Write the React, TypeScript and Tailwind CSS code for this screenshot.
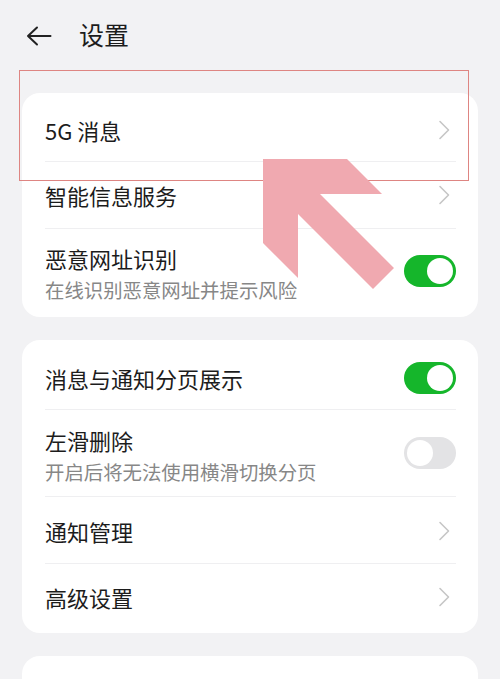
import React from "react";

const Chevron = () => (
  <svg width="12" height="20" viewBox="0 0 12 20" className="shrink-0">
    <path d="M2 1.5 L10.5 10 L2 18.5" fill="none" stroke="#c6c6c6" strokeWidth="1.6" strokeLinecap="round" strokeLinejoin="round" />
  </svg>
);

const Toggle = ({ on }: { on: boolean }) =>
  on ? (
    <div className="w-[52px] h-[32px] rounded-full bg-[#15b62b] flex items-center justify-end pr-[3px] shrink-0">
      <div className="w-[26px] h-[26px] rounded-full bg-white" />
    </div>
  ) : (
    <div className="w-[52px] h-[32px] rounded-full bg-[#e3e3e5] flex items-center justify-start pl-[3px] shrink-0">
      <div className="w-[26px] h-[26px] rounded-full bg-white" />
    </div>
  );

const Divider = () => <div className="h-px bg-[#efeff1] ml-[23px] mr-[22px]" />;

export default function App() {
  return (
    <div
      className="relative w-full min-h-[679px] h-[679px] overflow-hidden bg-[#f2f2f4]"
      style={{ fontFamily: '"Noto Sans CJK SC", "Noto Sans", sans-serif' }}
    >
      {/* header */}
      <div className="h-[72px] flex items-center pl-[26px]">
        <svg width="26" height="20" viewBox="0 0 26 20" className="shrink-0 mb-[1px]">
          <path d="M24.5 10 H2 M11 1.5 L2 10 L11 18.5" fill="none" stroke="#222" strokeWidth="2" strokeLinecap="round" strokeLinejoin="round" />
        </svg>
        <span className="ml-[27px] pb-[4px] text-[25px] leading-[34px] text-[#1c1c1c]">设置</span>
      </div>

      <div className="mt-[21px] px-[22px] flex flex-col gap-[23px]">
        {/* card 1 */}
        <div className="bg-white rounded-[18px] pt-[6px] pb-[4px]">
          <div className="h-[62px] flex items-center justify-between pl-[23px] pr-[28px]">
            <span className="text-[22px] leading-[30px] text-[#1c1c1c]">5G 消息</span>
            <Chevron />
          </div>
          <Divider />
          <div className="h-[66px] flex items-center justify-between pl-[23px] pr-[28px]">
            <span className="text-[22px] leading-[30px] text-[#1c1c1c]">智能信息服务</span>
            <Chevron />
          </div>
          <Divider />
          <div className="h-[84px] flex items-center justify-between pl-[23px] pr-[22px]">
            <div className="flex flex-col pt-[6px]">
              <span className="text-[22px] leading-[28px] text-[#1c1c1c]">恶意网址识别</span>
              <span className="mt-[4px] text-[19.4px] leading-[28px] text-[#878787]">在线识别恶意网址并提示风险</span>
            </div>
            <Toggle on />
          </div>
        </div>

        {/* card 2 */}
        <div className="bg-white rounded-[18px] pt-[6px] pb-[4px]">
          <div className="h-[63px] flex items-center justify-between pl-[23px] pr-[22px]">
            <span className="text-[22px] leading-[30px] text-[#1c1c1c]">消息与通知分页展示</span>
            <Toggle on />
          </div>
          <Divider />
          <div className="h-[86px] flex items-center justify-between pl-[23px] pr-[22px]">
            <div className="flex flex-col pt-[6px]">
              <span className="text-[22px] leading-[28px] text-[#1c1c1c]">左滑删除</span>
              <span className="mt-[4px] text-[19.4px] leading-[28px] text-[#878787]">开启后将无法使用横滑切换分页</span>
            </div>
            <Toggle on={false} />
          </div>
          <Divider />
          <div className="h-[66px] flex items-center justify-between pl-[23px] pr-[28px] pt-[2px]">
            <span className="text-[22px] leading-[30px] text-[#1c1c1c]">通知管理</span>
            <Chevron />
          </div>
          <Divider />
          <div className="h-[65px] flex items-center justify-between pl-[23px] pr-[28px] pt-[1px]">
            <span className="text-[22px] leading-[30px] text-[#1c1c1c]">高级设置</span>
            <Chevron />
          </div>
        </div>

        {/* card 3 */}
        <div className="bg-white rounded-t-[18px] h-[60px]" />
      </div>

      {/* red highlight rectangle */}
      <div className="absolute left-[19px] top-[70px] w-[450px] h-[111px] border-[1.5px] border-[#de8582] pointer-events-none" />

      {/* pink arrow */}
      <svg className="absolute left-0 top-0 pointer-events-none" width="500" height="679" viewBox="0 0 500 679">
        <polygon
          points="263,159 347,159 382,194 320,194 394,268 373,289 298,214 298,278 263,243"
          fill="#f0a9b0"
        />
      </svg>
    </div>
  );
}
